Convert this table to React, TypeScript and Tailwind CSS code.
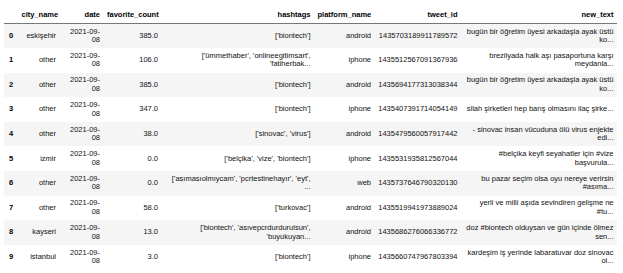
type Row = {
  city: string;
  fav: string;
  tags: string[];
  platform: string;
  id: string;
  text: string[];
};

const rows: Row[] = [
  { city: 'eskişehir', fav: '385.0', tags: ["['biontech']"], platform: 'android', id: '1435703189911789572', text: ['bugün bir öğretim üyesi arkadaşla ayak üstü', 'ko...'] },
  { city: 'other', fav: '106.0', tags: ["['ümmethaber', 'onlineegitimsart',", "'fatiherbak..."], platform: 'iphone', id: '1435512567091367936', text: ['brezilyada halk aşı pasaportuna karşı', 'meydanla...'] },
  { city: 'other', fav: '385.0', tags: ["['biontech']"], platform: 'android', id: '1435694177313038344', text: ['bugün bir öğretim üyesi arkadaşla ayak üstü', 'ko...'] },
  { city: 'other', fav: '347.0', tags: ["['biontech']"], platform: 'iphone', id: '1435407391714054149', text: ['silah şirketleri hep barış olmasını ilaç şirke...'] },
  { city: 'other', fav: '38.0', tags: ["['sinovac', 'virus']"], platform: 'android', id: '1435479560057917442', text: ['- sinovac insan vücuduna ölü virus enjekte', 'edi...'] },
  { city: 'izmir', fav: '0.0', tags: ["['belçika', 'vize', 'biontech']"], platform: 'iphone', id: '1435531935812567044', text: ['#belçika keyfi seyahatler için #vize', 'başvurula...'] },
  { city: 'other', fav: '0.0', tags: ["['asımasıolmıycam', 'pcrtestinehayır', 'eyt',", '...'], platform: 'web', id: '1435737646790320130', text: ['bu pazar seçim olsa oyu nereye verirsin', '#asıma...'] },
  { city: 'other', fav: '58.0', tags: ["['turkovac']"], platform: 'android', id: '1435519941973889024', text: ['yerli ve milli aşıda sevindiren gelişme ne', '#tu...'] },
  { city: 'kayseri', fav: '13.0', tags: ["['biontech', 'asıvepcrdurdurulsun',", "'buyukuyan..."], platform: 'android', id: '1435686276066336772', text: ['doz #biontech olduysan ve gün içinde ölmez', 'sen...'] },
  { city: 'istanbul', fav: '3.0', tags: ["['biontech']"], platform: 'iphone', id: '1435660747967803394', text: ['kardeşim iş yerinde labaratuvar doz sinovac', 'ol...'] },
];

const headers = ['city_name', 'date', 'favorite_count', 'hashtags', 'platform_name', 'tweet_id', 'new_text'];

function Lines({ lines }: { lines: string[] }) {
  return (
    <>
      {lines.map((l, i) => (
        <div key={i} className="whitespace-nowrap">{l}</div>
      ))}
    </>
  );
}

export default function App() {
  const cell = 'px-[3.5px] py-0 text-right align-middle font-normal';
  return (
    <div className="w-[623px] h-[273px] bg-white overflow-hidden font-['Liberation_Sans',Arial,sans-serif] text-[7.5px] leading-[8.5px] text-[#111]">
      <table className="ml-[4px] border-collapse table-fixed w-[613px]">
        <colgroup>
          <col className="w-[14px]" />
          <col className="w-[41.5px]" />
          <col className="w-[44px]" />
          <col className="w-[58px]" />
          <col className="w-[152.5px]" />
          <col className="w-[60.5px]" />
          <col className="w-[86.5px]" />
          <col className="w-[156px]" />
        </colgroup>
        <thead>
          <tr className="h-[23.5px] border-b border-[#777]">
            <th className="pl-[5px]" />
            {headers.map((h) => (
              <th key={h} className="px-[3.5px] pt-[8px] text-right font-bold text-black whitespace-nowrap">
                {h}
              </th>
            ))}
          </tr>
        </thead>
        <tbody>
          {rows.map((r, i) => (
            <tr key={i} className={i % 2 === 0 ? 'h-[24.6px] bg-[#f5f5f5]' : 'h-[24.6px] bg-white'}>
              <th className="pl-[5px] pr-0 text-left align-middle font-bold text-black">{i}</th>
              <td className={cell}>{r.city}</td>
              <td className={cell}>
                <Lines lines={['2021-09-', '08']} />
              </td>
              <td className={cell}>{r.fav}</td>
              <td className={cell}>
                <Lines lines={r.tags} />
              </td>
              <td className={cell}>{r.platform}</td>
              <td className={cell}>{r.id}</td>
              <td className={cell}>
                <Lines lines={r.text} />
              </td>
            </tr>
          ))}
        </tbody>
      </table>
    </div>
  );
}
